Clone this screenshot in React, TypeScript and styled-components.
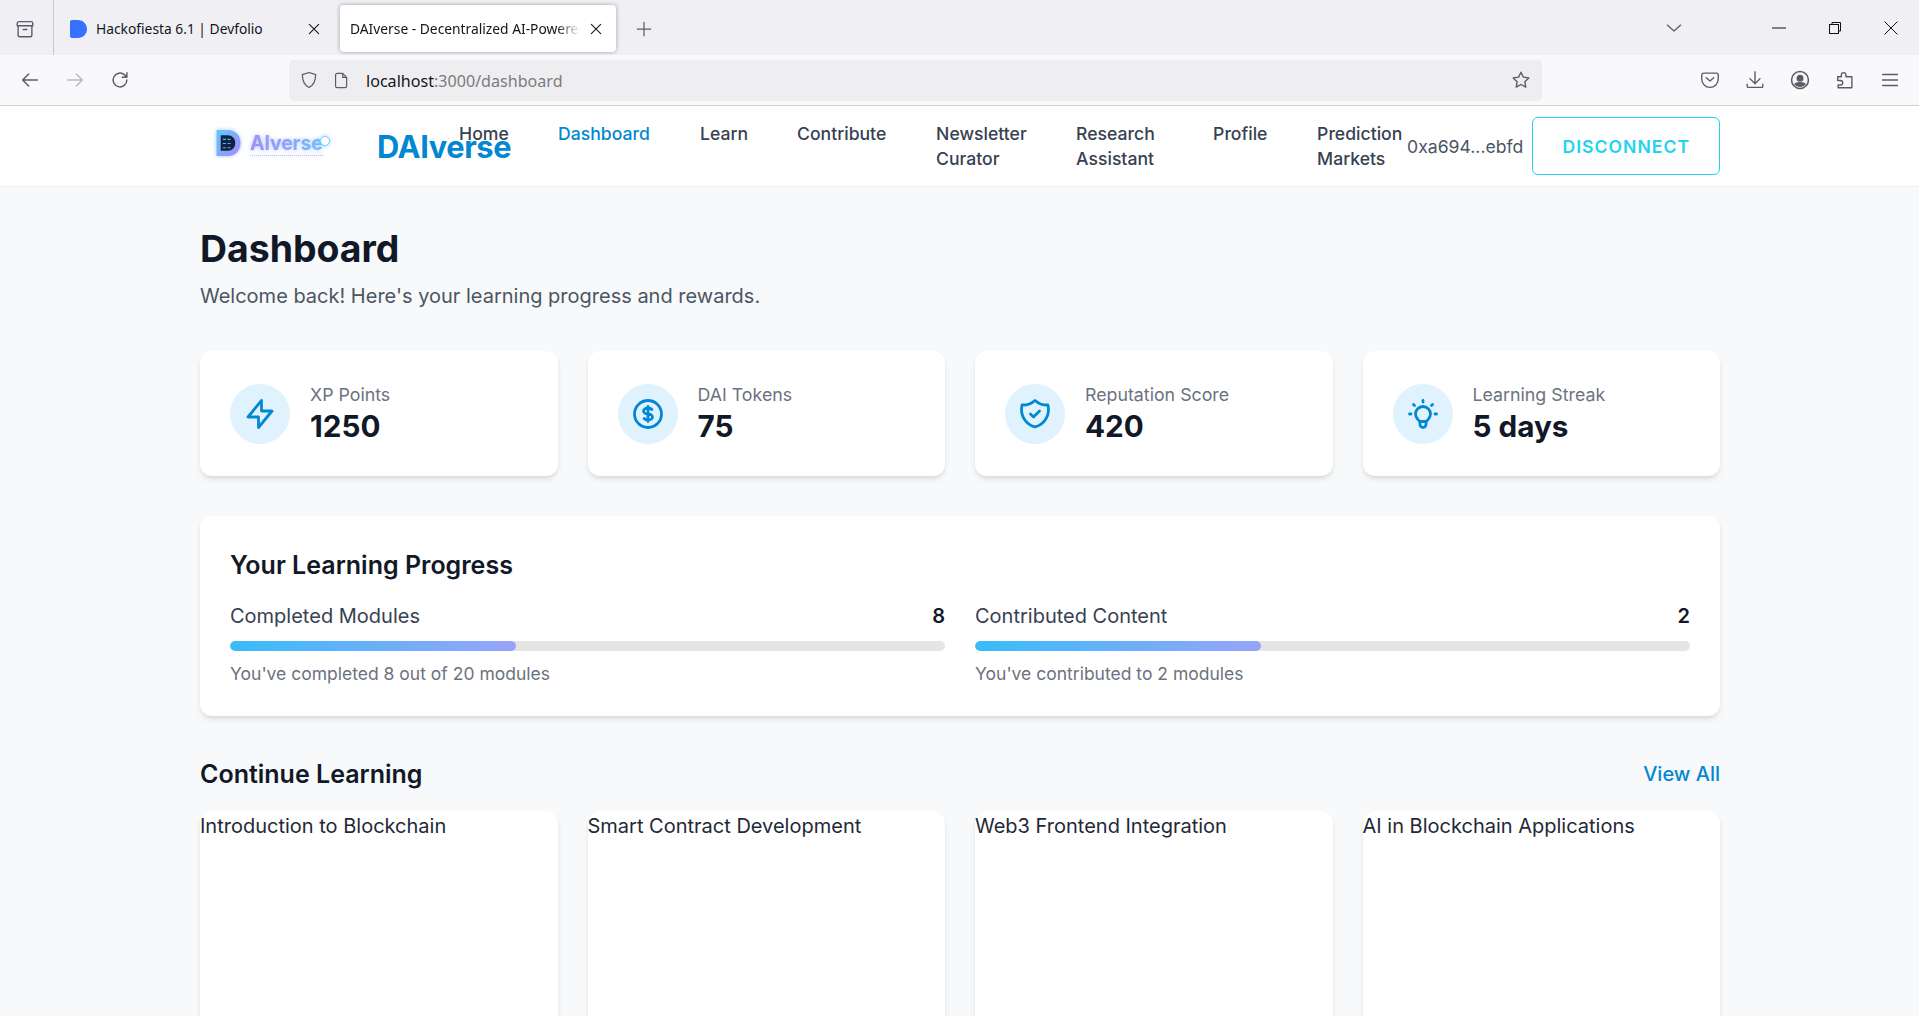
import React from "react";
import styled, { createGlobalStyle } from "styled-components";

const Global = createGlobalStyle`
  html, body { margin: 0; padding: 0; height: 100%; overflow: hidden; }
  #root { height: 100%; }
  * { box-sizing: border-box; }
`;

const Page = styled.div`
  height: 100vh;
  display: flex;
  flex-direction: column;
  overflow: hidden;
  font-family: Inter, "Liberation Sans", sans-serif;
  background: #f8f9fb;
`;

/* Browser chrome */
const TabStrip = styled.div`
  height: 55px;
  flex: none;
  display: flex;
  align-items: center;
  background: #f0f0f4;
  font-family: "Noto Sans", "Liberation Sans", sans-serif;
  font-size: 13.8px;
  color: #15141a;
`;
const SideSlot = styled.div`
  width: 54px;
  height: 55px;
  flex: none;
  display: flex;
  align-items: center;
  justify-content: center;
  border-right: 1px solid #c9c9cf;
  padding: 2px 4px 0 0;
`;
const Tab = styled.div<{ $active?: boolean }>`
  width: 276px;
  height: 47px;
  margin-top: 2px;
  margin-left: ${(p) => (p.$active ? "10px" : "0")};
  padding: 0 ${(p) => (p.$active ? "12px" : "8px")} 0 ${(p) => (p.$active ? "10px" : "15px")};
  display: flex;
  align-items: center;
  gap: 8px;
  border-radius: 4px;
  background: ${(p) => (p.$active ? "#fff" : "transparent")};
  box-shadow: ${(p) => (p.$active ? "0 0 4px rgba(0,0,0,.35)" : "none")};
`;
const TabTitle = styled.span<{ $fade?: boolean }>`
  flex: 1;
  white-space: nowrap;
  overflow: hidden;
  ${(p) =>
    p.$fade
      ? "mask-image: linear-gradient(to right, #000 90%, transparent); -webkit-mask-image: linear-gradient(to right, #000 90%, transparent);"
      : ""}
`;
const NewTab = styled.div`
  margin-left: 18px;
  display: flex;
  padding-top: 2px;
`;
const Spacer = styled.div`
  flex: 1;
`;
const WindowControls = styled.div`
  display: flex;
  align-items: center;
  padding-right: 21px;
  gap: 43px;
`;
const Minimize = styled.svg`
  margin-left: 45px;
`;
const ToolBar = styled.div`
  height: 51px;
  flex: none;
  display: flex;
  align-items: center;
  background: #f9f9fb;
  border-bottom: 1px solid #cfcfd3;
  padding: 0 18px 0 19px;
`;
const NavButtons = styled.div`
  display: flex;
  align-items: center;
  gap: 23px;
  width: 270px;
`;
const UrlBar = styled.div`
  width: 1253px;
  height: 41px;
  flex: none;
  background: #eeeef0;
  border-radius: 5px;
  display: flex;
  align-items: center;
  padding: 0 10px;
  gap: 13px;
  font-family: "Noto Sans", "Liberation Sans", sans-serif;
  font-size: 16.1px;
  color: #7b7b80;
`;
const UrlText = styled.div`
  flex: 1;
  margin: 2px 0 0 2px;
  b {
    font-weight: 400;
    color: #15141a;
  }
`;
const ToolIcons = styled.div`
  margin-left: auto;
  display: flex;
  align-items: center;
  gap: 23px;
`;

/* App */
const Viewport = styled.div`
  flex: 1;
  overflow: hidden;
`;
const Header = styled.header`
  height: 81px;
  background: #fff;
  border-bottom: 1px solid #eceef1;
`;
const HeaderInner = styled.div`
  width: 1520px;
  height: 100%;
  margin-left: 200px;
  display: flex;
  align-items: center;
`;
const LogoImage = styled.div`
  display: flex;
  align-items: center;
  gap: 8px;
  margin: 0 0 6px 15px;
  width: 162px;
  flex: none;
  filter: blur(0.5px) drop-shadow(0 0 2px rgba(125, 170, 250, 0.7));
`;
const LogoWord = styled.span`
  position: relative;
  font-size: 19.6px;
  line-height: 24px;
  font-weight: 700;
  letter-spacing: -0.2px;
  background: linear-gradient(90deg, #a58bfb, #8ea3fb 50%, #6cc0fb);
  -webkit-background-clip: text;
  background-clip: text;
  color: transparent;
  border-bottom: 1px dotted #c9b8fb;
  &::after {
    content: "";
    position: absolute;
    right: -7px;
    top: 5px;
    width: 8px;
    height: 8px;
    border-radius: 50%;
    border: 1.5px solid #62dafb;
    background: #fff;
  }
`;
const Brand = styled.div`
  flex: none;
  font-size: 30.8px;
  font-weight: 700;
  line-height: 40px;
  color: #0288d1;
  margin-top: 1px;
  letter-spacing: -0.4px;
`;
const NavList = styled.nav`
  display: flex;
  align-items: flex-start;
  margin-left: -52px;
  align-self: flex-start;
  padding-top: 15px;
`;
const NavItem = styled.div<{ $w: number; $active?: boolean }>`
  width: ${(p) => p.$w}px;
  flex: none;
  font-size: 17.6px;
  line-height: 25px;
  font-weight: 500;
  color: ${(p) => (p.$active ? "#0288d1" : "#374151")};
`;
const Wallet = styled.div`
  flex: none;
  font-size: 17.6px;
  color: #4b5563;
  margin-left: auto;
`;
const Disconnect = styled.button`
  flex: none;
  width: 188px;
  height: 58px;
  margin-left: 9px;
  background: #fff;
  border: 1px solid #22d3ee;
  border-radius: 6px;
  color: #22d3ee;
  font-family: inherit;
  font-size: 17.6px;
  font-weight: 600;
  letter-spacing: 1px;
`;
const Main = styled.main`
  width: 1520px;
  margin-left: 200px;
  padding-top: 40px;
`;
const Title = styled.h1`
  margin: 0;
  font-size: 37.4px;
  line-height: 44px;
  font-weight: 700;
  color: #111827;
`;
const Subtitle = styled.p`
  margin: 11px 0 0;
  font-size: 20px;
  line-height: 28px;
  color: #4b5563;
`;
const Grid = styled.div`
  display: grid;
  grid-template-columns: repeat(4, 1fr);
  gap: 30px;
`;
const StatsGrid = styled(Grid)`
  margin-top: 41px;
`;
const Card = styled.section`
  background: #fff;
  border-radius: 12px;
  box-shadow: 0 4px 6px -1px rgba(0, 0, 0, 0.1), 0 2px 4px -1px rgba(0, 0, 0, 0.06);
`;
const StatCard = styled(Card)`
  height: 125px;
  display: flex;
  align-items: center;
  gap: 20px;
  padding: 0 30px;
`;
const IconCircle = styled.div`
  width: 60px;
  height: 60px;
  flex: none;
  border-radius: 50%;
  background: #e0f2fe;
  display: flex;
  align-items: center;
  justify-content: center;
  color: #0288d1;
`;
const StatBody = styled.div`
  display: flex;
  flex-direction: column;
`;
const StatLabel = styled.div`
  font-size: 17.8px;
  line-height: 24px;
  color: #6b7280;
`;
const StatValue = styled.div`
  font-size: 29.7px;
  line-height: 38px;
  font-weight: 700;
  color: #111827;
`;
const ProgressCard = styled(Card)`
  margin-top: 40px;
  height: 200px;
  padding: 31px 30px 0;
`;
const SectionTitle = styled.h2`
  margin: 0;
  font-size: 25px;
  line-height: 36px;
  font-weight: 600;
  color: #111827;
`;
const ProgressGrid = styled.div`
  display: grid;
  grid-template-columns: 1fr 1fr;
  gap: 30px;
  margin-top: 19px;
`;
const ProgressHead = styled.div`
  display: flex;
  justify-content: space-between;
  align-items: center;
  font-size: 20px;
  line-height: 28px;
  color: #374151;
`;
const ProgressCount = styled.span`
  font-weight: 600;
  color: #111827;
`;
const Track = styled.div`
  height: 10px;
  margin-top: 11px;
  border-radius: 5px;
  background: #e5e5e5;
  overflow: hidden;
`;
const Fill = styled.div`
  height: 100%;
  border-radius: 5px;
  background: linear-gradient(90deg, #38bdf8, #98a3fb);
`;
const ProgressNote = styled.div`
  margin-top: 10px;
  font-size: 17.5px;
  line-height: 26px;
  color: #6b7280;
`;
const SectionHead = styled.div`
  margin-top: 40px;
  display: flex;
  justify-content: space-between;
  align-items: center;
`;
const ViewAll = styled.a`
  font-size: 20px;
  font-weight: 500;
  color: #0288d1;
`;
const CoursesGrid = styled(Grid)`
  margin-top: 19px;
`;
const CourseCard = styled(Card)`
  height: 300px;
  font-size: 20px;
  line-height: 30px;
  font-weight: 400;
  color: #1f2937;
`;

/* Icons */
const Svg = ({ s = 20, w = 1.5, c = "#5b5b66", children }: { s?: number; w?: number; c?: string; children: React.ReactNode }) => (
  <svg width={s} height={s} viewBox="0 0 24 24" fill="none" stroke={c} strokeWidth={w} strokeLinecap="round" strokeLinejoin="round" style={{ flex: "none", display: "block" }}>
    {children}
  </svg>
);
const Hero = ({ d }: { d: string }) => (
  <svg width={36} height={36} viewBox="0 0 24 24" fill="none" stroke="currentColor" strokeWidth={1.85} strokeLinecap="round" strokeLinejoin="round">
    <path d={d} />
  </svg>
);
const BOLT = "M13 10V3L4 14h7v7l9-11h-7z";
const DOLLAR =
  "M12 8c-1.657 0-3 .895-3 2s1.343 2 3 2 3 .895 3 2-1.343 2-3 2m0-8c1.11 0 2.08.402 2.599 1M12 8V7m0 1v8m0 0v1m0-1c-1.11 0-2.08-.402-2.599-1M21 12a9 9 0 11-18 0 9 9 0 0118 0z";
const SHIELD =
  "M9 12l2 2 4-4m5.618-4.016A11.955 11.955 0 0112 2.944a11.955 11.955 0 01-8.618 3.04A12.02 12.02 0 003 9c0 5.591 3.824 10.29 9 11.622 5.176-1.332 9-6.03 9-11.622 0-1.042-.133-2.052-.382-3.016z";
const BULB =
  "M9.663 17h4.673M12 3v1m6.364 1.636l-.707.707M21 12h-1M4 12H3m3.343-5.657l-.707-.707m2.828 9.9a5 5 0 117.072 0l-.548.547A3.374 3.374 0 0014 18.469V19a2 2 0 11-4 0v-.531c0-.895-.356-1.754-.988-2.386l-.548-.547z";

const stats = [
  { label: "XP Points", value: "1250", icon: BOLT },
  { label: "DAI Tokens", value: "75", icon: DOLLAR },
  { label: "Reputation Score", value: "420", icon: SHIELD },
  { label: "Learning Streak", value: "5 days", icon: BULB },
];
const links = [
  { t: "Home", w: 99 },
  { t: "Dashboard", w: 142, active: true },
  { t: "Learn", w: 97 },
  { t: "Contribute", w: 139 },
  { t: "Newsletter Curator", w: 140 },
  { t: "Research Assistant", w: 137 },
  { t: "Profile", w: 104 },
  { t: "Prediction Markets", w: 90 },
];
const progress = [
  { label: "Completed Modules", n: 8, pct: 40, note: "You've completed 8 out of 20 modules" },
  { label: "Contributed Content", n: 2, pct: 40, note: "You've contributed to 2 modules" },
];
const courses = ["Introduction to Blockchain", "Smart Contract Development", "Web3 Frontend Integration", "AI in Blockchain Applications"];

export default function App() {
  return (
    <Page>
      <Global />
      <TabStrip>
        <SideSlot>
          <Svg s={22}>
            <path d="M3.5 8.500V6a2 2 0 0 1 2-2h13a2 2 0 0 1 2 2v2.500zM4.500 8.500V18.500a2 2 0 0 0 2 2h11a2 2 0 0 0 2-2V8.500" />
            <path d="M10 12.500h4" />
          </Svg>
        </SideSlot>
        <Tab>
          <svg width="19" height="20" viewBox="0 0 19 20">
            <path d="M1 2.500A2 2 0 0 1 3 1h6c5 0 9 4 9 9s-4 9-9 9H3a2 2 0 0 1-2-2z" fill="#3770ff" />
          </svg>
          <TabTitle>Hackofiesta 6.1 | Devfolio</TabTitle>
          <Svg s={16} w={1.6} c="#15141a">
            <path d="M5 5l14 14M19 5L5 19" />
          </Svg>
        </Tab>
        <Tab $active>
          <TabTitle $fade>DAIverse - Decentralized AI-Powered Web3</TabTitle>
          <Svg s={16} w={1.6} c="#15141a">
            <path d="M5 5l14 14M19 5L5 19" />
          </Svg>
        </Tab>
        <NewTab>
          <Svg s={20}>
            <path d="M12 4v16M4 12h16" />
          </Svg>
        </NewTab>
        <Spacer />
        <WindowControls>
          <Svg s={20} w={1.5}>
            <path d="M4 8.500l8 7 8-7" />
          </Svg>
          <Minimize width="14" height="2" viewBox="0 0 14 2">
            <path d="M0 1h14" stroke="#111" strokeWidth="1" />
          </Minimize>
          <svg width="12" height="12" viewBox="0 0 12 12" fill="none" stroke="#111" strokeWidth="1">
            <rect x=".5" y="2.500" width="9" height="9" />
            <path d="M3 2.500V.5h8.500V9H9.500" />
          </svg>
          <svg width="14" height="14" viewBox="0 0 14 14" fill="none" stroke="#111" strokeWidth="1">
            <path d="M.5.5l13 13M13.500.5l-13 13" />
          </svg>
        </WindowControls>
      </TabStrip>
      <ToolBar>
        <NavButtons>
          <Svg s={22} w={1.6}>
            <path d="M20 12H4M10.500 5.500L4 12l6.500 6.500" />
          </Svg>
          <Svg s={22} w={1.6} c="#b9b9bd">
            <path d="M4 12h16M13.500 5.500L20 12l-6.500 6.500" />
          </Svg>
          <Svg s={22} w={1.6}>
            <path d="M19.500 12a7.500 7.500 0 1 1-2.500-5.600L19.500 9M19.500 4v5h-5" />
          </Svg>
        </NavButtons>
        <UrlBar>
          <Svg s={20} w={1.5}>
            <path d="M12 3l8 2.500c0 7-1.500 12.500-8 15.500C5.500 18 4 12.500 4 5.500z" />
          </Svg>
          <Svg s={19} w={1.5}>
            <path d="M6.500 3h7l5 5v11a2 2 0 0 1-2 2h-10a2 2 0 0 1-2-2V5a2 2 0 0 1 2-2zM13.500 3v5h5" />
          </Svg>
          <UrlText>
            <b>localhost</b>:3000/dashboard
          </UrlText>
          <Svg s={22} w={1.5}>
            <path d="M12 3.500l2.600 5.400 5.900.8-4.300 4.100 1 5.900L12 16.900l-5.200 2.800 1-5.900-4.300-4.100 5.900-.8z" />
          </Svg>
        </UrlBar>
        <ToolIcons>
          <Svg s={22}>
            <path d="M5 4.500h14a2 2 0 0 1 2 2V11a9 9 0 0 1-18 0V6.500a2 2 0 0 1 2-2zM8 9.500l4 3.500 4-3.500" />
          </Svg>
          <Svg s={22}>
            <path d="M12 3v13M6.500 10.500L12 16l5.500-5.500M3.500 16.500v2.500a1 1 0 0 0 1 1h15a1 1 0 0 0 1-1v-2.500" />
          </Svg>
          <Svg s={22} w={1.7}>
            <circle cx="12" cy="12" r="9.200" />
            <circle cx="12" cy="10" r="3" fill="#5b5b66" />
            <path d="M6.500 16.500c1.500-2 9.500-2 11 0-2.500 3-8.500 3-11 0z" fill="#5b5b66" />
          </Svg>
          <Svg s={22}>
            <path d="M4 8.500h4V6.500a2.500 2.500 0 0 1 5 0v2h6.500v12H4.500v-3h2.500a2.500 2.500 0 0 0 0-5H4z" />
          </Svg>
          <Svg s={22}>
            <path d="M4 6h16M4 12h16M4 18h16" />
          </Svg>
        </ToolIcons>
      </ToolBar>
      <Viewport>
        <Header>
          <HeaderInner>
            <LogoImage>
              <svg width="27" height="28" viewBox="0 0 25 27">
                <defs>
                  <linearGradient id="lg" x1="0" y1="0" x2="1" y2="1">
                    <stop offset="0" stopColor="#5ec8fb" />
                    <stop offset="1" stopColor="#a78bfa" />
                  </linearGradient>
                </defs>
                <path d="M1 1h11a12 12 0 0 1 12 12.500A12 12 0 0 1 12 26H1z" fill="url(#lg)" />
                <path d="M5 6h7a7 7 0 0 1 7 7.500A7 7 0 0 1 12 21H5z" fill="#13233f" />
                <path d="M7 10h9M7 14h9M7 18h8" stroke="#38bdf8" strokeWidth="1" strokeDasharray="3 1.500" />
              </svg>
              <LogoWord>AIverse</LogoWord>
            </LogoImage>
            <Brand>DAIverse</Brand>
            <NavList>
              {links.map((l) => (
                <NavItem key={l.t} $w={l.w} $active={l.active}>
                  {l.t}
                </NavItem>
              ))}
            </NavList>
            <Wallet>0xa694...ebfd</Wallet>
            <Disconnect>DISCONNECT</Disconnect>
          </HeaderInner>
        </Header>
        <Main>
          <Title>Dashboard</Title>
          <Subtitle>Welcome back! Here's your learning progress and rewards.</Subtitle>
          <StatsGrid>
            {stats.map((s) => (
              <StatCard key={s.label}>
                <IconCircle>
                  <Hero d={s.icon} />
                </IconCircle>
                <StatBody>
                  <StatLabel>{s.label}</StatLabel>
                  <StatValue>{s.value}</StatValue>
                </StatBody>
              </StatCard>
            ))}
          </StatsGrid>
          <ProgressCard>
            <SectionTitle>Your Learning Progress</SectionTitle>
            <ProgressGrid>
              {progress.map((p) => (
                <div key={p.label}>
                  <ProgressHead>
                    <span>{p.label}</span>
                    <ProgressCount>{p.n}</ProgressCount>
                  </ProgressHead>
                  <Track>
                    <Fill style={{ width: `${p.pct}%` }} />
                  </Track>
                  <ProgressNote>{p.note}</ProgressNote>
                </div>
              ))}
            </ProgressGrid>
          </ProgressCard>
          <SectionHead>
            <SectionTitle>Continue Learning</SectionTitle>
            <ViewAll>View All</ViewAll>
          </SectionHead>
          <CoursesGrid>
            {courses.map((c) => (
              <CourseCard key={c}>{c}</CourseCard>
            ))}
          </CoursesGrid>
        </Main>
      </Viewport>
    </Page>
  );
}
